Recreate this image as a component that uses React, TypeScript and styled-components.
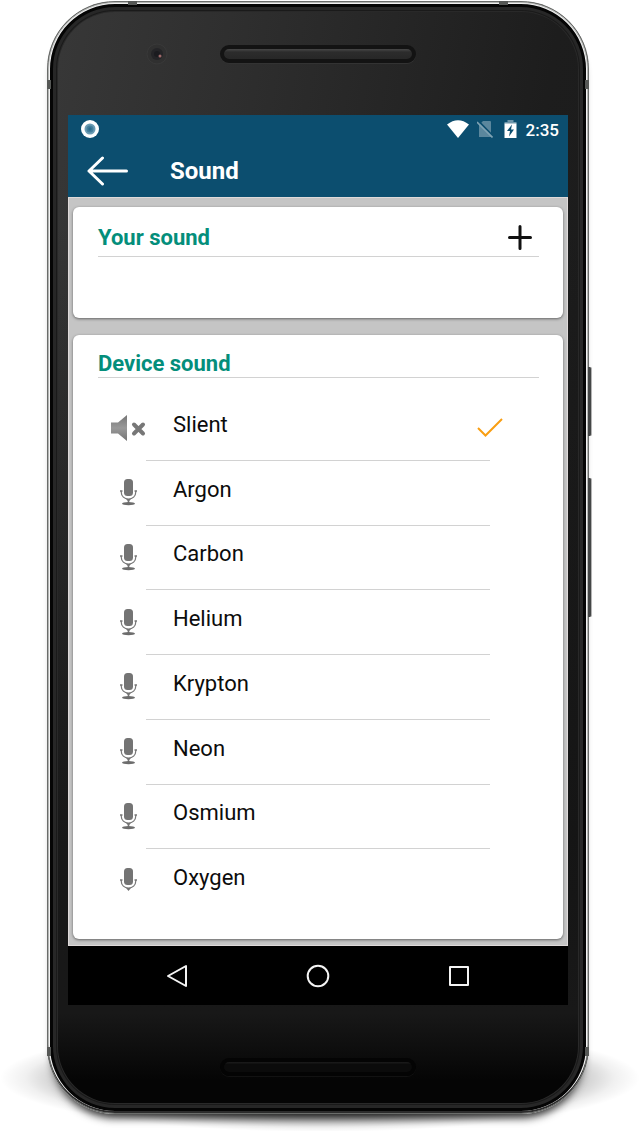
import React, { useState } from "react";
import styled, { createGlobalStyle } from "styled-components";

const GlobalStyle = createGlobalStyle`
  *, *::before, *::after { box-sizing: border-box; }
  body {
    margin: 0;
    background: #fff;
    font-family: Roboto, "Liberation Sans", sans-serif;
  }
`;

const Page = styled.main`
  position: relative;
  overflow: hidden;
  padding: 1px 51px 18px 47px;
`;

const FloorShadow = styled.div`
  position: absolute;
  left: 0;
  right: 0;
  bottom: 0;
  height: 108px;
  background: radial-gradient(closest-side, rgba(0, 0, 0, 0.7), rgba(0, 0, 0, 0.5) 60%, rgba(0, 0, 0, 0.22) 80%, rgba(0, 0, 0, 0.06) 92%, transparent);
`;

const Device = styled.div`
  position: relative;
  display: flex;
  flex-direction: column;
  padding: 0 20px;
  border: 1px solid #6a6c6a;
  border-radius: 68px;
  background:
    linear-gradient(180deg, transparent 0, transparent 20%, rgba(20, 20, 20, 0.85) 75%, #181818 91%, #050505 97%),
    linear-gradient(100deg, #383838, #2f2f2f 25%, #1d1d1d 70%, #1a1a1a);
  box-shadow:
    inset 0 -2px 0 #2c2c2c,
    inset 0 0 0 1px #b4b6b4,
    inset 0 0 0 2px #f1f1f1,
    inset 0 0 0 5px #050505,
    inset 0 0 0 8px #272727,
    inset 0 0 0 9px #1a1a1a,
    inset 0 0 0 10px #292929,
    0 10px 9px -6px rgba(0, 0, 0, 0.8);
`;

const Antenna = styled.span<{ $side: "top" | "bottom" | "left" | "right"; $end?: boolean }>`
  position: absolute;
  background: #565856;
  ${({ $side, $end }) =>
    $side === "top" || $side === "bottom"
      ? `width: 9px; height: 4px; ${$side}: -1px; ${$end ? "right" : "left"}: 80px;`
      : `width: 4px; height: 9px; ${$side}: -1px; ${$end ? "bottom: 57px" : "top: 78px"};`}
`;

const SideKey = styled.span<{ $top: number; $length: number }>`
  position: absolute;
  right: -4px;
  top: ${({ $top }) => $top}px;
  width: 4px;
  height: ${({ $length }) => $length}px;
  border-right: 1px solid #b4b4b4;
  border-radius: 0 2px 2px 0;
  background: #444646;
`;

const Bezel = styled.div<{ $chin?: boolean }>`
  display: grid;
  grid-template-columns: 1fr 196px 1fr;
  align-items: center;
  height: ${({ $chin }) => ($chin ? 108 : 113)}px;
  padding: ${({ $chin }) => ($chin ? "16px 0 0" : "0 0 10px")};
`;

const Camera = styled.svg`
  display: block;
  justify-self: end;
  margin-right: 52px;
`;

const Speaker = styled.span<{ $dim?: boolean }>`
  grid-column: 2;
  height: 18px;
  border: 4px solid ${({ $dim }) => ($dim ? "#040404" : "#131313")};
  border-radius: 9px;
  background: ${({ $dim }) =>
    $dim ? "linear-gradient(#1c1c1c, #0b0b0b 25%)" : "linear-gradient(#484848, #2c2c2c 30%, #272727)"};
  box-shadow: 0 1px 0 ${({ $dim }) => ($dim ? "#121212" : "#333")};
`;

const Screen = styled.div`
  display: flex;
  flex-direction: column;
`;

const StatusBar = styled.div`
  display: flex;
  align-items: center;
  height: 28px;
  padding: 0 9px 0 13px;
  background: #0c4e6f;
  color: #fff;
`;

const StatusIcon = styled.svg<{ $gap?: number }>`
  display: block;
  margin-right: ${({ $gap = 0 }) => $gap}px;
`;

const Spacer = styled.span`
  flex: 1;
`;

const Clock = styled.time`
  padding-top: 2px;
  font-size: 17px;
  line-height: 24px;
  font-weight: 500;
`;

const AppBar = styled.header`
  display: flex;
  align-items: center;
  gap: 42px;
  height: 54px;
  padding: 2px 19px 0;
  background: #0c4e6f;
  color: #fff;
`;

const IconButton = styled.button`
  display: flex;
  align-items: center;
  justify-content: center;
  padding: 0;
  border: 0;
  background: none;
  color: inherit;
  cursor: pointer;
`;

const Title = styled.h1`
  margin: 0;
  font-size: 24px;
  line-height: 32px;
  font-weight: 700;
`;

const Content = styled.div`
  display: flex;
  flex-direction: column;
  gap: 17px;
  padding: 10px 5px 7px;
  background: #c5c5c5;
  box-shadow: inset 0 0 0 1px #dfdada;
`;

const Card = styled.section<{ $bottom: number }>`
  padding: 0 24px ${({ $bottom }) => $bottom}px 25px;
  border-radius: 6px;
  background: #fff;
  box-shadow: 0 1px 3px rgba(0, 0, 0, 0.5);
`;

const CardHeader = styled.div<{ $compact?: boolean }>`
  display: flex;
  align-items: center;
  justify-content: space-between;
  height: ${({ $compact }) => ($compact ? 43 : 50)}px;
  padding: ${({ $compact }) => ($compact ? "15px 7px 0 0" : "13px 7px 0 0")};
  border-bottom: 1px solid #d2d2d2;
`;

const CardTitle = styled.h2`
  margin: 0;
  font-size: 22px;
  line-height: 28px;
  font-weight: 700;
  color: #048e7b;
`;

const SoundList = styled.ul`
  display: grid;
  grid-auto-rows: 1fr;
  min-height: 518px;
  margin: 18px 0 0;
  padding: 0 49px 0 12px;
  list-style: none;
`;

const SoundRow = styled.li`
  display: flex;
`;

const SoundLabel = styled.label`
  position: relative;
  display: flex;
  flex: 1;
  cursor: pointer;
`;

const SoundIcon = styled.span`
  display: flex;
  align-items: center;
  justify-content: center;
  width: 36px;
`;

const RowBody = styled.span<{ $last: boolean }>`
  display: flex;
  flex: 1;
  align-items: center;
  justify-content: space-between;
  padding-left: 27px;
  border-bottom: 1px solid ${({ $last }) => ($last ? "transparent" : "#d2d2d2")};
`;

const SoundName = styled.span`
  padding-bottom: 6px;
  font-size: 22px;
  line-height: 28px;
  color: #0c0c0c;
`;

const Check = styled.svg`
  display: none;
  margin-right: -13px;
`;

const Radio = styled.input`
  position: absolute;
  width: 100%;
  height: 100%;
  margin: 0;
  opacity: 0;
  cursor: pointer;

  &:checked ~ ${RowBody} ${Check} {
    display: block;
  }
`;

const NavBar = styled.nav`
  display: grid;
  grid-template-columns: repeat(3, 1fr);
  height: 59px;
  padding: 0 39px;
  background: #000;
  color: #f4f4f4;
`;

function MuteIcon() {
  return (
    <svg width="36" height="28" viewBox="0 0 36 28" aria-hidden="true">
      <defs>
        <linearGradient id="horn" x1="0" y1="0" x2="0" y2="1">
          <stop offset="0" stopColor="#757575" />
          <stop offset="0.5" stopColor="#999" />
          <stop offset="1" stopColor="#747474" />
        </linearGradient>
      </defs>
      <path d="M1 8.5H8L17 1V27L8 19.500H1Z" fill="url(#horn)" />
      <path d="M24 10.500L33 19.500M33 10.500L24 19.500" stroke="#777" strokeWidth="4" strokeLinecap="round" />
    </svg>
  );
}

function MicIcon({ cut }: { cut?: boolean }) {
  return (
    <svg width="18" height="30" viewBox="0 0 18 30" aria-hidden="true" fill="none">
      <rect x="5" y="1" width="9" height="17" rx="3.500" fill="#747474" />
      <path d="M2.300 13V14.500C2.300 18.300 5.300 21 9.500 21S16.700 18.300 16.700 14.500V13" stroke="#777" strokeWidth="1.200" />
      <path d="M1 13H3.500M15.500 13H18" stroke="#777" strokeWidth="1.400" />
      {cut ? (
        <path d="M7 21H12L9.500 24Z" fill="#747474" />
      ) : (
        <>
          <path d="M7 21H12L10.300 23V25H8.700V23Z" fill="#747474" />
          <ellipse cx="9.500" cy="25.700" rx="6.500" ry="1.600" fill="#6c6c6c" />
        </>
      )}
    </svg>
  );
}

const sounds = ["Slient", "Argon", "Carbon", "Helium", "Krypton", "Neon", "Osmium", "Oxygen"];

export default function App() {
  const [selected, setSelected] = useState("Slient");

  return (
    <>
      <GlobalStyle />
      <Page>
        <FloorShadow />
        <Device>
          <Antenna $side="top" />
          <Antenna $side="top" $end />
          <Antenna $side="left" />
          <Antenna $side="left" $end />
          <Antenna $side="right" />
          <Antenna $side="right" $end />
          <SideKey $top={365} $length={69} />
          <SideKey $top={476} $length={139} />

          <Bezel>
            <Camera width="22" height="22" viewBox="0 0 22 22" aria-hidden="true">
              <circle cx="11" cy="11" r="10" fill="#303030" stroke="#393939" />
              <circle cx="11" cy="11" r="6" fill="#242427" />
              <circle cx="11" cy="11" r="3" fill="#1b1b1f" />
              <circle cx="14" cy="13" r="1.500" fill="#a06a6a" />
            </Camera>
            <Speaker />
          </Bezel>

          <Screen>
            <StatusBar>
              <StatusIcon width="18" height="18" viewBox="0 0 18 18" aria-hidden="true">
                <circle cx="9" cy="9" r="9" fill="#fff" />
                <circle cx="9" cy="9" r="5.500" fill="#6a9bb3" />
                <circle cx="9" cy="9" r="3.500" fill="#447e9b" />
                <circle cx="9" cy="9" r="1.700" fill="#2c6c8c" />
              </StatusIcon>
              <Spacer />
              <StatusIcon $gap={8} width="22" height="18" viewBox="0 0 22 18" aria-hidden="true">
                <path d="M0 4.500Q11 -4 22 4.500L11 18Z" fill="#fff" />
              </StatusIcon>
              <StatusIcon $gap={11} width="16" height="18" viewBox="0 0 16 18" aria-hidden="true">
                <path d="M6 1H13Q14 1 14 2V17H2V5Z" fill="#5b879d" />
                <path d="M1 0.500L16 16" stroke="#0c4e6f" strokeWidth="1.800" />
                <path d="M0 2L15.500 17.500" stroke="#7fa2b3" strokeWidth="1.600" />
              </StatusIcon>
              <StatusIcon $gap={9} width="13" height="18" viewBox="0 0 13 18" aria-hidden="true">
                <path d="M3.500 0H9.500V2H12.500V4H0.500V2H3.500Z" fill="#6d95a9" />
                <path d="M0.500 3.500H12.500V18H0.500Z" fill="#fff" />
                <path d="M8 4.500L3 11H6L5 16.500L10 9.500H7Z" fill="#0c4e6f" />
              </StatusIcon>
              <Clock>2:35</Clock>
            </StatusBar>

            <AppBar>
              <IconButton type="button" aria-label="Back">
                <svg width="41" height="30" viewBox="0 0 41 30" fill="none" stroke="#fff" strokeWidth="3" strokeLinecap="round" strokeLinejoin="round" aria-hidden="true">
                  <path d="M15.500 2L2 15L15.500 28M2 15H39.500" />
                </svg>
              </IconButton>
              <Title>Sound</Title>
            </AppBar>

            <Content>
              <Card $bottom={61}>
                <CardHeader>
                  <CardTitle>Your sound</CardTitle>
                  <IconButton type="button" aria-label="Add sound">
                    <svg width="24" height="26" viewBox="0 0 24 26" stroke="#111" strokeWidth="3" strokeLinecap="round" aria-hidden="true">
                      <path d="M12 1.500V23.500M1.500 12.500H22.500" />
                    </svg>
                  </IconButton>
                </CardHeader>
              </Card>

              <Card $bottom={25}>
                <CardHeader $compact>
                  <CardTitle id="device-sound">Device sound</CardTitle>
                </CardHeader>
                <SoundList role="radiogroup" aria-labelledby="device-sound">
                  {sounds.map((name, index) => {
                    const last = index === sounds.length - 1;
                    return (
                      <SoundRow key={name}>
                        <SoundLabel>
                          <Radio
                            type="radio"
                            name="sound"
                            value={name}
                            checked={selected === name}
                            onChange={() => setSelected(name)}
                          />
                          <SoundIcon>{index === 0 ? <MuteIcon /> : <MicIcon cut={last} />}</SoundIcon>
                          <RowBody $last={last}>
                            <SoundName>{name}</SoundName>
                            <Check width="26" height="20" viewBox="0 0 26 20" fill="none" stroke="#f99e12" strokeWidth="2" aria-hidden="true">
                              <path d="M1 10L8.500 17.500L25 1" />
                            </Check>
                          </RowBody>
                        </SoundLabel>
                      </SoundRow>
                    );
                  })}
                </SoundList>
              </Card>
            </Content>

            <NavBar aria-label="System">
              <IconButton type="button" aria-label="Back">
                <svg width="24" height="24" viewBox="0 0 24 24" fill="none" stroke="currentColor" strokeWidth="2" strokeLinejoin="round" aria-hidden="true">
                  <path d="M21 2V22L3 12Z" />
                </svg>
              </IconButton>
              <IconButton type="button" aria-label="Home">
                <svg width="24" height="24" viewBox="0 0 24 24" fill="none" stroke="currentColor" strokeWidth="2" aria-hidden="true">
                  <circle cx="12" cy="12" r="10.300" />
                </svg>
              </IconButton>
              <IconButton type="button" aria-label="Recent apps">
                <svg width="24" height="24" viewBox="0 0 24 24" fill="none" stroke="currentColor" strokeWidth="2" strokeLinejoin="round" aria-hidden="true">
                  <path d="M3 3H21V21H3Z" />
                </svg>
              </IconButton>
            </NavBar>
          </Screen>

          <Bezel $chin>
            <Speaker $dim />
          </Bezel>
        </Device>
      </Page>
    </>
  );
}
